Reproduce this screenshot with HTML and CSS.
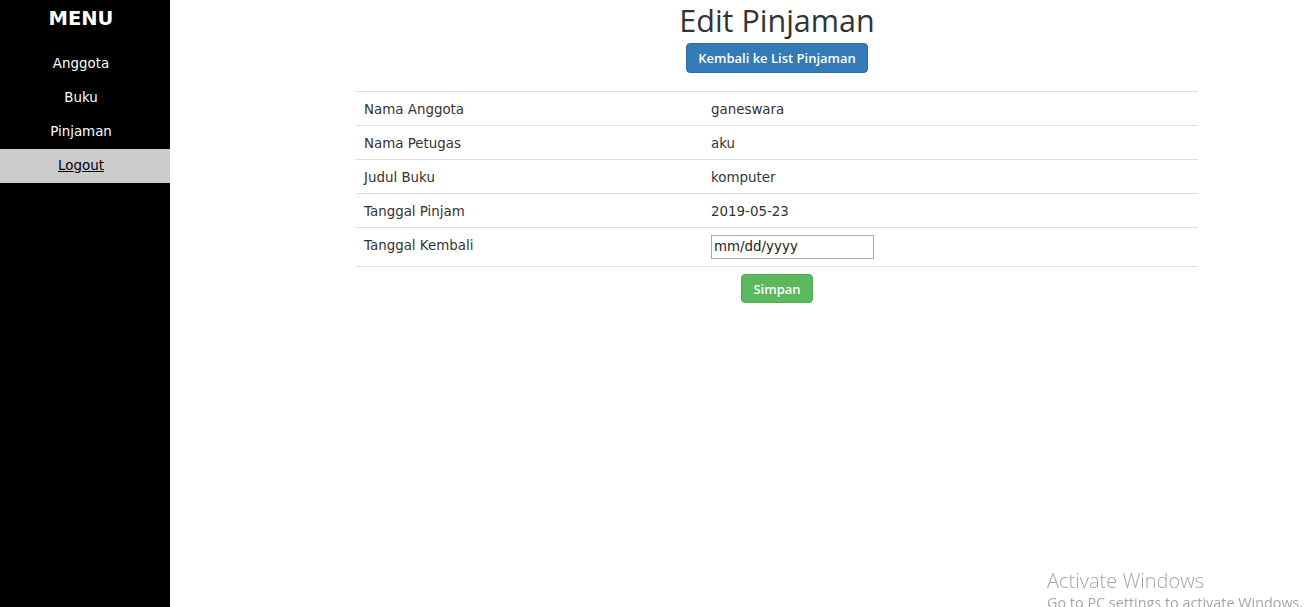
FILE: index.html
```html
<!DOCTYPE html>
<html>
<head>
<meta charset="utf-8">
<title>Edit Pinjaman</title>
<link rel="stylesheet" href="styles.css">
</head>
<body>
<div class="layout">
  <nav class="sidebar">
    <h2 class="menu-title">MENU</h2>
    <a class="nav-link" href="#">Anggota</a>
    <a class="nav-link" href="#">Buku</a>
    <a class="nav-link" href="#">Pinjaman</a>
    <a class="nav-link logout" href="#">Logout</a>
  </nav>
  <main class="main">
    <div class="content">
      <h1 class="page-title">Edit Pinjaman</h1>
      <div class="center"><a class="btn btn-primary" href="#">Kembali ke List Pinjaman</a></div>
      <table class="table">
        <tr><td class="label">Nama Anggota</td><td>ganeswara</td></tr>
        <tr><td class="label">Nama Petugas</td><td>aku</td></tr>
        <tr><td class="label">Judul Buku</td><td>komputer</td></tr>
        <tr><td class="label">Tanggal Pinjam</td><td>2019-05-23</td></tr>
        <tr class="input-row"><td class="label">Tanggal Kembali</td><td><span class="date-input">mm/dd/yyyy</span></td></tr>
      </table>
      <div class="center"><button class="btn btn-success" type="button">Simpan</button></div>
    </div>
  </main>
</div>
<div class="watermark">
  <div class="wm-title">Activate Windows</div>
  <div class="wm-sub">Go to PC settings to activate Windows.</div>
</div>
</body>
</html>
```

FILE: styles.css
```css
* { box-sizing: border-box; }
html, body { margin: 0; padding: 0; height: 100%; overflow: hidden; }
body {
  font-family: "DejaVu Sans", Verdana, sans-serif;
  font-size: 13.4px;
  color: #333;
  background: #fff;
}
.layout { display: flex; height: 607px; }
.sidebar {
  width: 170px;
  flex: 0 0 170px;
  background: #000;
  display: flex;
  flex-direction: column;
}
.menu-title {
  margin: 0;
  height: 47px;
  padding-top: 6px;
  padding-right: 8px;
  text-align: center;
  color: #fff;
  font-size: 19.5px;
  font-weight: bold;
  line-height: 26px;
}
.nav-link {
  display: block;
  height: 34px;
  line-height: 34px;
  text-align: center;
  padding-right: 8px;
  color: #fff;
  text-decoration: none;
  font-size: 13.4px;
}
.nav-link.logout {
  background: #ccc;
  color: #000;
  text-decoration: underline;
}
.main { flex: 1; }
.content {
  width: 842px;
  margin-left: 186px;
  display: flex;
  flex-direction: column;
}
.page-title {
  margin: 0;
  padding-top: 2px;
  height: 43px;
  text-align: center;
  font-family: "Open Sans", sans-serif;
  font-weight: 400;
  font-size: 30.5px;
  line-height: 36px;
  color: #333;
}
.center { display: flex; justify-content: center; }
.btn {
  display: inline-block;
  border: 1px solid transparent;
  border-radius: 4px;
  color: #fff;
  text-decoration: none;
  font-family: "Open Sans", sans-serif;
  font-weight: 600;
  font-size: 13px;
  line-height: 16px;
  padding: 6px 11px;
  cursor: pointer;
  white-space: nowrap;
}
.btn-primary { background: #337ab7; border-color: #2e6da4; height: 30px; }
.btn-success { background: #5cb85c; border-color: #4cae4c; height: 29px; padding: 5px 11px; }
.table {
  width: 842px;
  border-collapse: collapse;
  margin-top: 18px;
  margin-bottom: 7px;
}
.table td {
  border-top: 1px solid #ddd;
  padding: 9px 8px 7px;
  height: 34px;
  line-height: 17px;
  vertical-align: top;
  text-align: left;
}
.table tr:last-child td { border-bottom: 1px solid #ddd; }
.table td.label { width: 347px; }
.input-row td { height: 37px; padding-top: 7px; }
.input-row td.label { padding-top: 9px; }
.date-input {
  display: inline-block;
  width: 163px;
  height: 24px;
  border: 1px solid #a9a9a9;
  padding: 2px 2px;
  font-size: 13.4px;
  line-height: 18px;
  color: #222;
  vertical-align: top;
}
.watermark {
  position: fixed;
  left: 1047px;
  top: 568px;
  color: #a6a6a6;
  font-family: "Open Sans", sans-serif;
  white-space: nowrap;
}
.wm-title { font-size: 20px; line-height: 26px; font-weight: 300; }
.wm-sub { font-size: 14.4px; line-height: 18px; }
```
